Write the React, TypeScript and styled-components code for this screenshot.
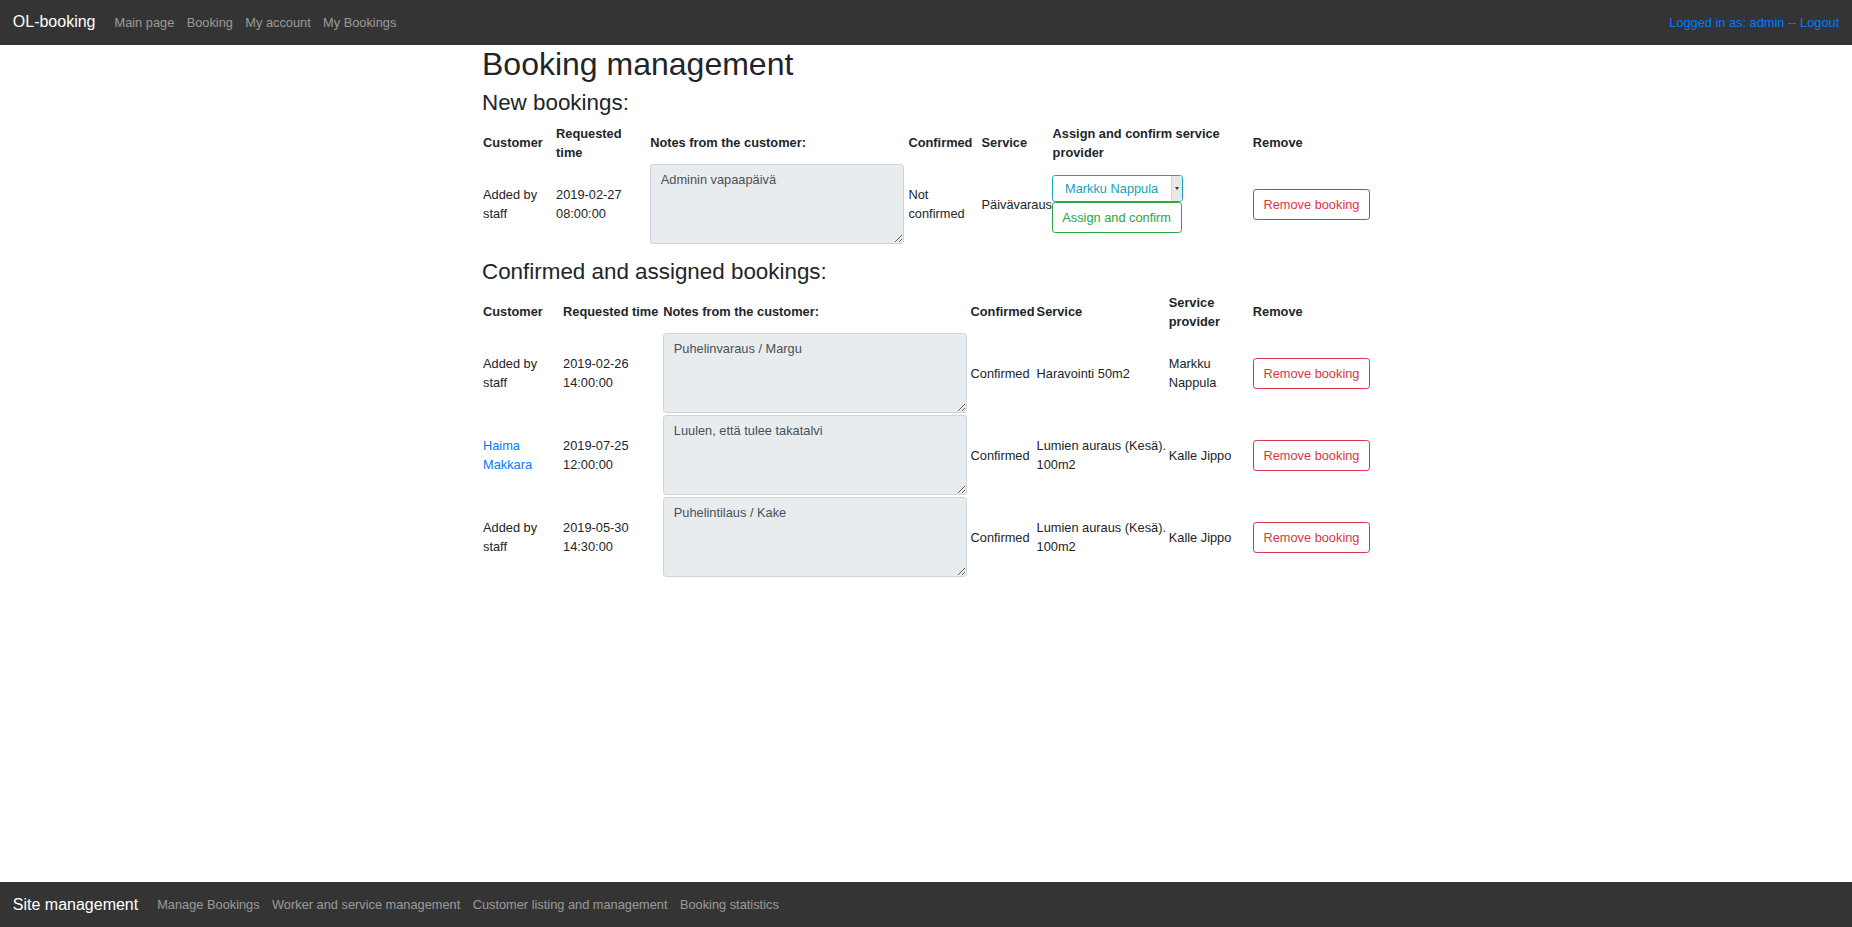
import React from "react";
import styled, { createGlobalStyle } from "styled-components";

const GlobalStyle = createGlobalStyle`
  html, body { margin: 0; padding: 0; }
  body {
    font-family: "Liberation Sans", Arial, sans-serif;
    font-size: 12.8px;
    line-height: 1.5;
    color: #212529;
    background: #fff;
  }
  * { box-sizing: border-box; }
`;

const Page = styled.div`
  min-height: 100vh;
  display: flex;
  flex-direction: column;
`;

const Navbar = styled.nav`
  display: flex;
  align-items: center;
  justify-content: space-between;
  height: 44.8px;
  padding: 6.4px 12.8px;
  background: #353434;
  flex-shrink: 0;
`;

const NavLeft = styled.div`
  display: flex;
  align-items: center;
`;

const Brand = styled.a`
  font-size: 16px;
  line-height: 24px;
  padding: 4px 0;
  margin-right: 12.8px;
  color: #fff;
  text-decoration: none;
  white-space: nowrap;
`;

const NavLink = styled.a`
  padding: 6.4px 6.2px;
  color: rgba(255, 255, 255, 0.5);
  text-decoration: none;
  white-space: nowrap;
`;

const UserLink = styled.a`
  color: #007bff;
  text-decoration: none;
  white-space: nowrap;
`;

const Container = styled.main`
  width: 912px;
  margin: 0 auto;
  padding: 0 12px;
`;

const Title = styled.h1`
  margin: 0 0 6.4px;
  font-size: 32px;
  font-weight: 500;
  line-height: 1.2;
`;

const SectionTitle = styled.h3`
  margin: 0 0 6.4px;
  font-size: 22.4px;
  font-weight: 500;
  line-height: 1.2;
`;

const Table = styled.table`
  width: 100%;
  table-layout: fixed;
  border-collapse: collapse;
  margin-bottom: 13.4px;
`;

const Th = styled.th`
  text-align: left;
  font-weight: bold;
  padding: 1px 0 1px 1px;
  vertical-align: middle;
`;

const Td = styled.td`
  padding: 1px 0 1px 1px;
  vertical-align: middle;
`;

const Notes = styled.textarea`
  display: block;
  width: calc(100% - 3px);
  height: 80px;
  padding: 4.8px 9.6px;
  font-family: inherit;
  font-size: 12.8px;
  line-height: 1.5;
  color: #495057;
  background: #e9ecef;
  border: 1px solid #ced4da;
  border-radius: 3.2px;
  resize: vertical;
  outline: none;
`;

const CustomerLink = styled.a`
  color: #007bff;
  text-decoration: none;
`;

const AssignCell = styled.div`
  display: flex;
  flex-direction: column;
  align-items: flex-start;
  margin-left: -1px;
`;

const SelectBox = styled.div`
  display: flex;
  width: 131px;
  height: 27px;
  border: 1px solid #17a2b8;
  border-radius: 3.2px;
  overflow: hidden;
  background: #fff;
`;

const SelectValue = styled.span`
  flex: 1;
  text-align: center;
  color: #17a2b8;
  line-height: 25px;
  white-space: nowrap;
`;

const SelectArrow = styled.span`
  width: 11px;
  background: #e8e8e8;
  border-left: 1px solid #d6d6d6;
  display: flex;
  align-items: center;
  justify-content: center;

  &::after {
    content: "";
    border-top: 3px solid #333;
    border-left: 2px solid transparent;
    border-right: 2px solid transparent;
  }
`;

const OutlineButton = styled.button<{ $color: string }>`
  font-family: inherit;
  font-size: 12.8px;
  line-height: 19.2px;
  padding: 4.8px 9.6px;
  border: 1px solid ${(p) => p.$color};
  border-radius: 3.2px;
  color: ${(p) => p.$color};
  background: transparent;
  white-space: nowrap;
  cursor: pointer;
`;

const Footer = styled.footer`
  margin-top: auto;
  display: flex;
  align-items: center;
  height: 44.8px;
  padding: 6.4px 12.8px;
  background: #353434;
  flex-shrink: 0;
`;

type Confirmed = {
  customer: string;
  isLink?: boolean;
  date: string;
  time: string;
  notes: string;
  service: string;
  provider: string;
};

const confirmed: Confirmed[] = [
  {
    customer: "Added by staff",
    date: "2019-02-26",
    time: "14:00:00",
    notes: "Puhelinvaraus / Margu",
    service: "Haravointi 50m2",
    provider: "Markku Nappula",
  },
  {
    customer: "Haima Makkara",
    isLink: true,
    date: "2019-07-25",
    time: "12:00:00",
    notes: "Luulen, että tulee takatalvi",
    service: "Lumien auraus (Kesä). 100m2",
    provider: "Kalle Jippo",
  },
  {
    customer: "Added by staff",
    date: "2019-05-30",
    time: "14:30:00",
    notes: "Puhelintilaus / Kake",
    service: "Lumien auraus (Kesä). 100m2",
    provider: "Kalle Jippo",
  },
];

export default function App() {
  return (
    <>
      <GlobalStyle />
      <Page>
        <Navbar>
          <NavLeft>
            <Brand href="#">OL-booking</Brand>
            <NavLink href="#">Main page</NavLink>
            <NavLink href="#">Booking</NavLink>
            <NavLink href="#">My account</NavLink>
            <NavLink href="#">My Bookings</NavLink>
          </NavLeft>
          <UserLink href="#">Logged in as: admin -- Logout</UserLink>
        </Navbar>

        <Container>
          <Title>Booking management</Title>
          <SectionTitle>New bookings:</SectionTitle>
          <Table>
            <colgroup>
              <col style={{ width: 73 }} />
              <col style={{ width: 94 }} />
              <col style={{ width: 258 }} />
              <col style={{ width: 73 }} />
              <col style={{ width: 71 }} />
              <col style={{ width: 200 }} />
              <col style={{ width: 118 }} />
            </colgroup>
            <thead>
              <tr>
                <Th>Customer</Th>
                <Th>Requested time</Th>
                <Th>Notes from the customer:</Th>
                <Th>Confirmed</Th>
                <Th>Service</Th>
                <Th>Assign and confirm service provider</Th>
                <Th>Remove</Th>
              </tr>
            </thead>
            <tbody>
              <tr>
                <Td>Added by staff</Td>
                <Td>2019-02-27 08:00:00</Td>
                <Td>
                  <Notes readOnly defaultValue="Adminin vapaapäivä" />
                </Td>
                <Td>Not confirmed</Td>
                <Td>Päivävaraus</Td>
                <Td>
                  <AssignCell>
                    <SelectBox>
                      <SelectValue>Markku Nappula</SelectValue>
                      <SelectArrow />
                    </SelectBox>
                    <OutlineButton $color="#28a745">Assign and confirm</OutlineButton>
                  </AssignCell>
                </Td>
                <Td>
                  <OutlineButton $color="#dc3545">Remove booking</OutlineButton>
                </Td>
              </tr>
            </tbody>
          </Table>

          <SectionTitle>Confirmed and assigned bookings:</SectionTitle>
          <Table>
            <colgroup>
              <col style={{ width: 80 }} />
              <col style={{ width: 100 }} />
              <col style={{ width: 307 }} />
              <col style={{ width: 66 }} />
              <col style={{ width: 132 }} />
              <col style={{ width: 84 }} />
              <col style={{ width: 118 }} />
            </colgroup>
            <thead>
              <tr>
                <Th>Customer</Th>
                <Th>Requested time</Th>
                <Th>Notes from the customer:</Th>
                <Th>Confirmed</Th>
                <Th>Service</Th>
                <Th>Service provider</Th>
                <Th>Remove</Th>
              </tr>
            </thead>
            <tbody>
              {confirmed.map((b, i) => (
                <tr key={i}>
                  <Td>
                    {b.isLink ? (
                      <CustomerLink href="#">{b.customer}</CustomerLink>
                    ) : (
                      b.customer
                    )}
                  </Td>
                  <Td>
                    {b.date} {b.time}
                  </Td>
                  <Td>
                    <Notes readOnly defaultValue={b.notes} />
                  </Td>
                  <Td>Confirmed</Td>
                  <Td>{b.service}</Td>
                  <Td>{b.provider}</Td>
                  <Td>
                    <OutlineButton $color="#dc3545">Remove booking</OutlineButton>
                  </Td>
                </tr>
              ))}
            </tbody>
          </Table>
        </Container>

        <Footer>
          <Brand href="#">Site management</Brand>
          <NavLink href="#">Manage Bookings</NavLink>
          <NavLink href="#">Worker and service management</NavLink>
          <NavLink href="#">Customer listing and management</NavLink>
          <NavLink href="#">Booking statistics</NavLink>
        </Footer>
      </Page>
    </>
  );
}
